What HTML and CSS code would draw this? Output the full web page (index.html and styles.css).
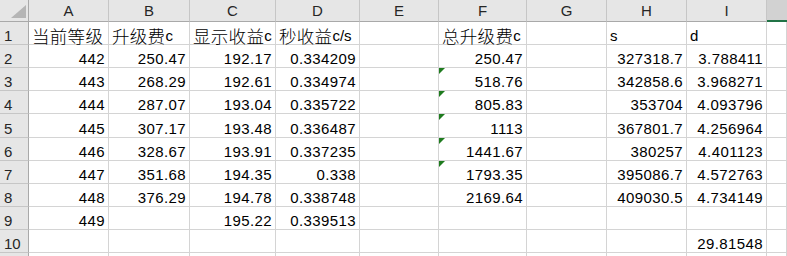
FILE: index.html
```html
<!DOCTYPE html>
<html lang="zh">
<head>
<meta charset="utf-8">
<link rel="stylesheet" href="styles.css">
</head>
<body>
<div class="sheet">
  <div class="corner"><span class="tri"></span></div>
  <div class="ch">A</div><div class="ch">B</div><div class="ch">C</div><div class="ch">D</div><div class="ch">E</div><div class="ch">F</div><div class="ch">G</div><div class="ch">H</div><div class="ch">I</div><div class="ch sel"></div>

  <div class="rh">1</div>
  <div class="c"><span class="cj">当前等级</span></div>
  <div class="c"><span class="cj">升级费</span>c</div>
  <div class="c"><span class="cj">显示收益</span>c</div>
  <div class="c"><span class="cj">秒收益</span>c/s</div>
  <div class="c"></div>
  <div class="c"><span class="cj">总升级费</span>c</div>
  <div class="c"></div>
  <div class="c">s</div>
  <div class="c">d</div>
  <div class="c"></div>

  <div class="rh">2</div>
  <div class="c n">442</div><div class="c n">250.47</div><div class="c n">192.17</div><div class="c n">0.334209</div><div class="c"></div><div class="c n">250.47</div><div class="c"></div><div class="c n">327318.7</div><div class="c n">3.788411</div><div class="c"></div>

  <div class="rh">3</div>
  <div class="c n">443</div><div class="c n">268.29</div><div class="c n">192.61</div><div class="c n">0.334974</div><div class="c"></div><div class="c n flag">518.76</div><div class="c"></div><div class="c n">342858.6</div><div class="c n">3.968271</div><div class="c"></div>

  <div class="rh">4</div>
  <div class="c n">444</div><div class="c n">287.07</div><div class="c n">193.04</div><div class="c n">0.335722</div><div class="c"></div><div class="c n flag">805.83</div><div class="c"></div><div class="c n">353704</div><div class="c n">4.093796</div><div class="c"></div>

  <div class="rh">5</div>
  <div class="c n">445</div><div class="c n">307.17</div><div class="c n">193.48</div><div class="c n">0.336487</div><div class="c"></div><div class="c n flag">1113</div><div class="c"></div><div class="c n">367801.7</div><div class="c n">4.256964</div><div class="c"></div>

  <div class="rh">6</div>
  <div class="c n">446</div><div class="c n">328.67</div><div class="c n">193.91</div><div class="c n">0.337235</div><div class="c"></div><div class="c n flag">1441.67</div><div class="c"></div><div class="c n">380257</div><div class="c n">4.401123</div><div class="c"></div>

  <div class="rh">7</div>
  <div class="c n">447</div><div class="c n">351.68</div><div class="c n">194.35</div><div class="c n">0.338</div><div class="c"></div><div class="c n flag">1793.35</div><div class="c"></div><div class="c n">395086.7</div><div class="c n">4.572763</div><div class="c"></div>

  <div class="rh">8</div>
  <div class="c n">448</div><div class="c n">376.29</div><div class="c n">194.78</div><div class="c n">0.338748</div><div class="c"></div><div class="c n">2169.64</div><div class="c"></div><div class="c n">409030.5</div><div class="c n">4.734149</div><div class="c"></div>

  <div class="rh">9</div>
  <div class="c n">449</div><div class="c"></div><div class="c n">195.22</div><div class="c n">0.339513</div><div class="c"></div><div class="c"></div><div class="c"></div><div class="c"></div><div class="c"></div><div class="c"></div>

  <div class="rh">10</div>
  <div class="c"></div><div class="c"></div><div class="c"></div><div class="c"></div><div class="c"></div><div class="c"></div><div class="c"></div><div class="c"></div><div class="c n">29.81548</div><div class="c"></div>

  <div class="rh"></div>
  <div class="c"></div><div class="c"></div><div class="c"></div><div class="c"></div><div class="c"></div><div class="c"></div><div class="c"></div><div class="c"></div><div class="c"></div><div class="c"></div>
</div>
</body>
</html>
```
FILE: styles.css
```css
html, body {
  margin: 0;
  padding: 0;
  background: #ffffff;
  overflow: hidden;
}

.sheet {
  width: 787px;
  height: 256px;
  display: grid;
  grid-template-columns: 29px 80px 81px 86px 84px 79px 88px 80px 80px 80px 20px;
  grid-template-rows: 22px 23px 23px 23px 23px 24px 23px 23px 23px 23px 23px 10px;
  font-family: "Liberation Sans", "Noto Sans CJK SC", sans-serif;
  font-size: 15px;
  line-height: 16px;
  color: #000000;
  overflow: hidden;
}

.sheet > div {
  box-sizing: border-box;
  min-width: 0;
  white-space: nowrap;
}

.corner {
  background: #e6e6e6;
  border-right: 1px solid #a9a9a9;
  border-bottom: 1px solid #a9a9a9;
  position: relative;
}

.tri {
  position: absolute;
  right: 2px;
  bottom: 3px;
  width: 0;
  height: 0;
  border-left: 15px solid transparent;
  border-bottom: 13px solid #b5b5b5;
}

.ch {
  background: #e6e6e6;
  border-right: 1px solid #c6c6c6;
  border-bottom: 1px solid #a9a9a9;
  display: flex;
  align-items: center;
  justify-content: center;
  color: #262626;
  padding-top: 1px;
}

.ch.sel {
  background: #d2d2d2;
  border-bottom: 2px solid #217346;
  border-right: none;
}

.rh {
  background: #e6e6e6;
  border-right: 1px solid #a9a9a9;
  border-bottom: 1px solid #c6c6c6;
  display: flex;
  align-items: flex-end;
  padding-left: 4px;
  color: #262626;
}

.c {
  border-right: 1px solid #d4d4d4;
  border-bottom: 1px solid #d4d4d4;
  display: flex;
  align-items: flex-end;
  justify-content: flex-start;
  padding: 0 2px 0 3px;
  position: relative;
}

.c.n {
  justify-content: flex-end;
  letter-spacing: 0.4px;
  padding-right: 3px;
}

.cj {
  font-family: "Noto Sans CJK SC", sans-serif;
  font-size: 17.5px;
  font-weight: 300;
  line-height: 16px;
  letter-spacing: 0.3px;
}

.flag::before {
  content: "";
  position: absolute;
  left: 0;
  top: 0;
  width: 0;
  height: 0;
  border-top: 6px solid #1e7b1e;
  border-right: 6px solid transparent;
}
```
